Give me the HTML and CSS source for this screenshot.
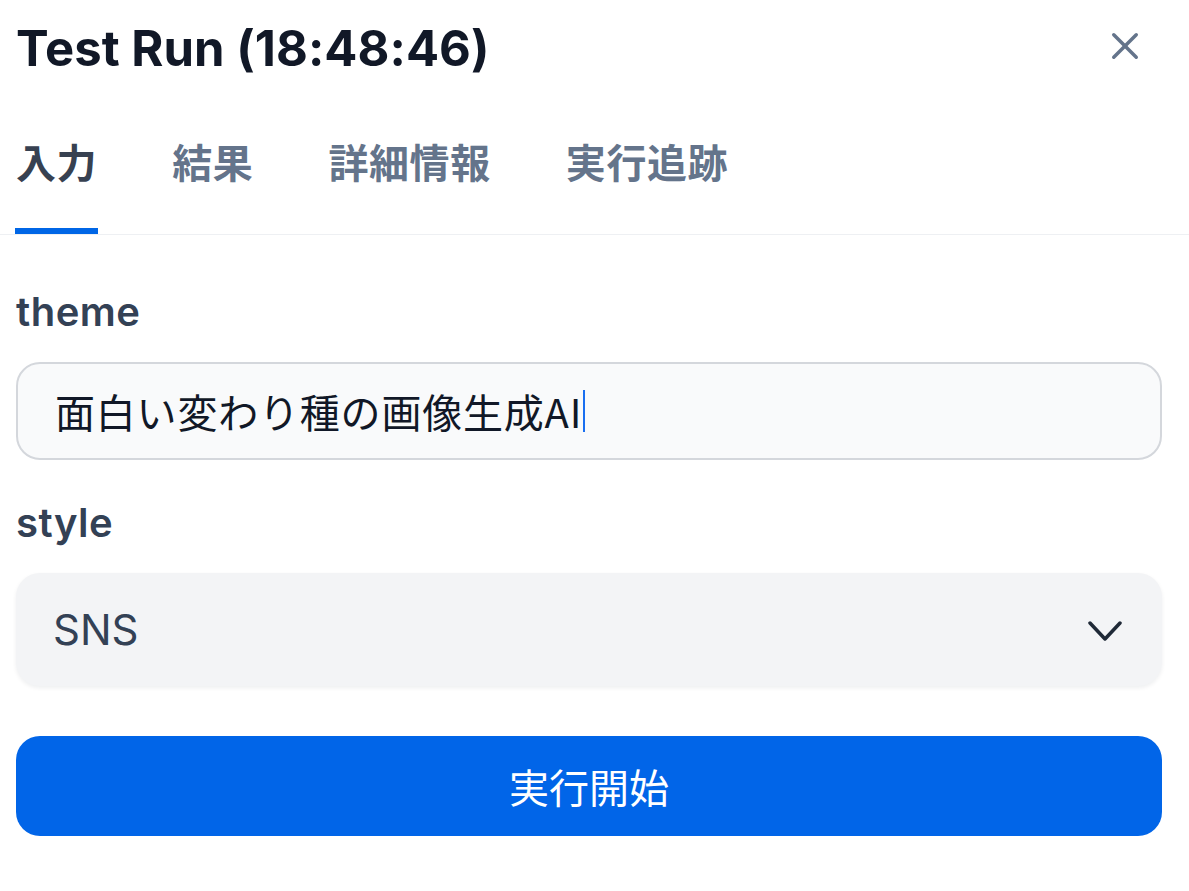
FILE: index.html
```html
<!DOCTYPE html>
<html lang="ja">
<head>
<meta charset="utf-8">
<title>Test Run</title>
<link rel="stylesheet" href="styles.css">
</head>
<body>
<div class="panel">
  <header class="header">
    <h1 class="title">Test Run (18:48:46)</h1>
    <button class="close" aria-label="閉じる">
      <svg width="40" height="40" viewBox="0 0 40 40" fill="none" stroke="currentColor" stroke-width="3.5" stroke-linecap="round">
        <line x1="8.75" y1="8.75" x2="31.25" y2="31.25"/>
        <line x1="31.25" y1="8.75" x2="8.75" y2="31.25"/>
      </svg>
    </button>
  </header>
  <nav class="tabs">
    <div class="tab active">入力</div>
    <div class="tab">結果</div>
    <div class="tab">詳細情報</div>
    <div class="tab">実行追跡</div>
  </nav>
  <form class="form">
    <div class="field">
      <label class="label">theme</label>
      <div class="input"><span class="input-text">面白い変わり種の画像生成AI</span><span class="caret"></span></div>
    </div>
    <div class="field field-gap">
      <label class="label">style</label>
      <div class="select">
        <span class="select-text">SNS</span>
        <svg class="chevron" width="34" height="21" viewBox="0 0 34 21" fill="none" stroke="currentColor" stroke-width="3.5" stroke-linecap="round" stroke-linejoin="round">
          <polyline points="2,2 17,18 32,2"/>
        </svg>
      </div>
    </div>
    <button type="button" class="run">実行開始</button>
  </form>
</div>
</body>
</html>
```

FILE: styles.css
```css
* {
  box-sizing: border-box;
}

html, body {
  margin: 0;
  padding: 0;
  background: #ffffff;
}

body {
  font-family: "Inter", "Noto Sans CJK JP", sans-serif;
  color: #111827;
}

.panel {
  width: 1189px;
}

.header {
  display: flex;
  justify-content: space-between;
  align-items: flex-start;
  height: 94px;
  padding: 19px 44px 0 16px;
}

.title {
  margin: 0;
  font-family: "Inter", "Noto Sans CJK JP", sans-serif;
  font-size: 49px;
  font-weight: 700;
  line-height: 60px;
  color: #111827;
  letter-spacing: 0.05px;
}

.close {
  margin-top: 7px;
  width: 40px;
  height: 40px;
  padding: 0;
  border: 0;
  background: transparent;
  color: #64748b;
  display: flex;
}

.tabs {
  display: flex;
  gap: 73px;
  padding-left: 15px;
  border-bottom: 1px solid #eef0f3;
}

.tab {
  font-family: "Noto Sans CJK JP", sans-serif;
  font-size: 40px;
  font-weight: 600;
  line-height: 48px;
  letter-spacing: 0.6px;
  padding: 43px 1px 43px;
  border-bottom: 6px solid transparent;
  color: #64748b;
}

.tab.active {
  color: #374151;
  border-bottom-color: #0066e6;
}

.form {
  margin: 0;
  padding: 53px 27px 0 16px;
  display: flex;
  flex-direction: column;
}

.field {
  display: flex;
  flex-direction: column;
}

.field-gap {
  margin-top: 39px;
}

.label {
  font-family: "Inter", "Noto Sans CJK JP", sans-serif;
  font-size: 40px;
  font-weight: 600;
  line-height: 48px;
  letter-spacing: 0.5px;
  color: #334155;
  margin-bottom: 26px;
}

.input {
  height: 98px;
  border: 2px solid #d4d7dc;
  border-radius: 24px;
  background: #f9fafb;
  display: flex;
  align-items: center;
  padding-left: 37px;
}

.input-text {
  font-family: "Noto Sans CJK JP", sans-serif;
  font-size: 40px;
  line-height: 48px;
  letter-spacing: 0.8px;
  color: #111827;
}

.caret {
  display: inline-block;
  width: 2px;
  height: 42px;
  margin-left: 1px;
  background: #1a6ff0;
}

.select {
  height: 113px;
  border-radius: 24px;
  background: #f3f4f6;
  box-shadow: 0 2px 4px rgba(15, 23, 42, 0.07);
  display: flex;
  align-items: center;
  justify-content: space-between;
  padding: 0 40px 0 37px;
}

.select-text {
  font-family: "Inter", "Noto Sans CJK JP", sans-serif;
  font-size: 42px;
  line-height: 48px;
  color: #334155;
}

.chevron {
  color: #1f2937;
  margin-top: 4px;
}

.run {
  margin-top: 50px;
  height: 100px;
  border: 0;
  border-radius: 24px;
  background: #0165e8;
  color: #ffffff;
  font-family: "Noto Sans CJK JP", sans-serif;
  font-size: 40px;
  line-height: 48px;
  padding: 0;
}
```
